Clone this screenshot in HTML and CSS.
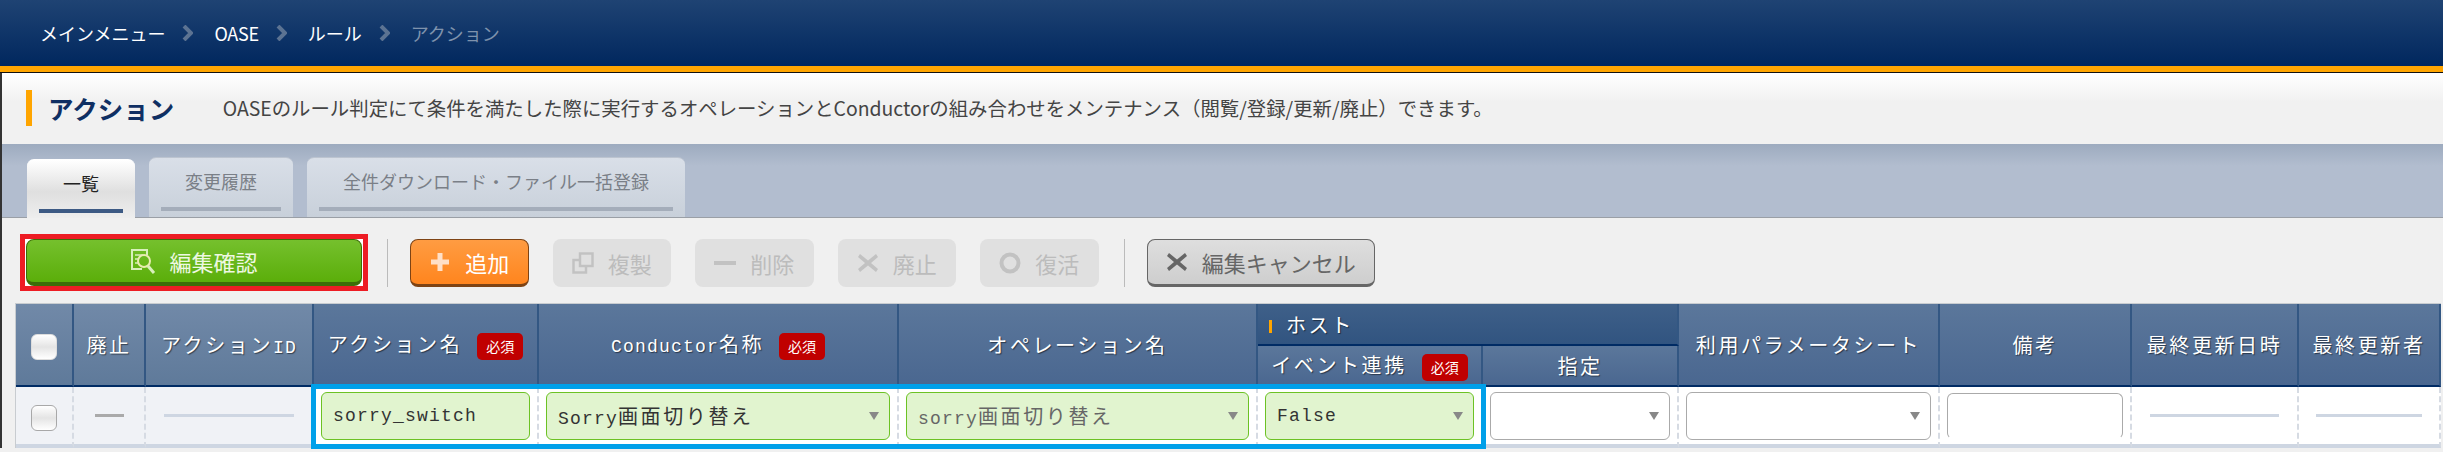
FILE: index.html
```html
<!DOCTYPE html>
<html lang="ja">
<head>
    <meta charset="UTF-8">
    <title>アクション</title>
    <link rel="stylesheet" href="styles.css">
</head>
<body>
    <nav class="crumbs">
        <a>メインメニュー</a>
        <svg class="chev" viewBox="0 0 11 16"><path d="M2 1l7 7-7 7" fill="none" stroke="#5c7392" stroke-width="4"/></svg>
        <a class="narrow">OASE</a>
        <svg class="chev" viewBox="0 0 11 16"><path d="M2 1l7 7-7 7" fill="none" stroke="#5c7392" stroke-width="4"/></svg>
        <a>ルール</a>
        <svg class="chev" viewBox="0 0 11 16"><path d="M2 1l7 7-7 7" fill="none" stroke="#5c7392" stroke-width="4"/></svg>
        <a class="current">アクション</a>
    </nav>
    <div class="accent"></div>

    <div class="main">
        <div class="title-bar">
            <h1>アクション</h1>
            <p>OASEのルール判定にて条件を満たした際に実行するオペレーションとConductorの組み合わせをメンテナンス（閲覧/登録/更新/廃止）できます。</p>
        </div>

        <div class="tabs">
            <div class="tab active"><span class="tab-label">一覧</span></div>
            <div class="tab"><span class="tab-label">変更履歴</span></div>
            <div class="tab"><span class="tab-label">全件ダウンロード・ファイル一括登録</span></div>
        </div>

        <div class="toolbar">
            <div class="red-frame">
                <button class="btn btn-green">
                    <svg class="icon-check" viewBox="0 0 26 25" fill="none" stroke="#d8f0bc" stroke-width="2">
                        <path d="M12 20H2V1h15v5"/>
                        <path d="M5 6h8M5 10h3M5 14h3" stroke-width="1.500"/>
                        <circle cx="14" cy="12" r="6" stroke="#e8ecb0"/>
                        <path d="M18 17l6 7" stroke-width="3"/>
                    </svg>
                    編集確認
                </button>
            </div>
            <span class="sep first"></span>
            <button class="btn btn-orange">
                <svg class="icon" viewBox="0 0 22 22"><path d="M8.500 2h5v6.500H20v5h-6.500V20h-5v-6.500H2v-5h6.500z" fill="#ffe0c8"/></svg>
                追加
            </button>
            <button class="btn btn-off">
                <svg class="icon" viewBox="0 0 22 22" fill="none" stroke="#c2c2c2" stroke-width="2.500"><path d="M8 1.500h12.500V14H8z"/><path d="M8 8H1.500v12.500H14V14"/></svg>
                複製
            </button>
            <button class="btn btn-off">
                <svg class="icon" viewBox="0 0 22 22"><rect x="0" y="9" width="22" height="4" fill="#c2c2c2"/></svg>
                削除
            </button>
            <button class="btn btn-off">
                <svg class="icon" viewBox="0 0 22 22"><path d="M3 2l8 6.500L19 2l2 3-7 6 7 6-2 3-8-6.500L3 20l-2-3 7-6-7-6z" fill="#c2c2c2"/></svg>
                廃止
            </button>
            <button class="btn btn-off">
                <svg class="icon" viewBox="0 0 22 22"><circle cx="11" cy="11" r="8.500" fill="none" stroke="#c2c2c2" stroke-width="4"/></svg>
                復活
            </button>
            <span class="sep"></span>
            <button class="btn btn-gray">
                <svg class="icon" viewBox="0 0 22 22"><path d="M3 2l8 6.500L19 2l2 3-7 6 7 6-2 3-8-6.500L3 20l-2-3 7-6-7-6z" fill="#666"/></svg>
                編集キャンセル
            </button>
        </div>

        <div class="grid">
            <table>
                <colgroup>
                    <col class="c1"><col class="c2"><col class="c3"><col class="c4"><col class="c5"><col class="c6">
                    <col class="c7"><col class="c8"><col class="c9"><col class="c10"><col class="c11"><col class="c12">
                </colgroup>
                <thead>
                    <tr class="head-top">
                        <th rowspan="2" class="light"><span class="check"></span></th>
                        <th rowspan="2" class="light">廃止</th>
                        <th rowspan="2" class="light">アクション<span class="lat">ID</span></th>
                        <th rowspan="2">アクション名<span class="req">必須</span></th>
                        <th rowspan="2"><span class="lat">Conductor</span>名称<span class="req">必須</span></th>
                        <th rowspan="2">オペレーション名</th>
                        <th colspan="2" class="group"><i class="mark"></i>ホスト</th>
                        <th rowspan="2">利用パラメータシート</th>
                        <th rowspan="2">備考</th>
                        <th rowspan="2">最終更新日時</th>
                        <th rowspan="2">最終更新者</th>
                    </tr>
                    <tr class="head-sub">
                        <th>イベント連携<span class="req">必須</span></th>
                        <th>指定</th>
                    </tr>
                </thead>
                <tbody>
                    <tr>
                        <td class="tint"><span class="check row-check"></span></td>
                        <td class="tint"><span class="dash dark"></span></td>
                        <td class="tint"><span class="dash id"></span></td>
                        <td><div class="field ok"><span class="lat">sorry_switch</span></div></td>
                        <td><div class="field ok"><span><span class="lat">Sorry</span>画面切り替え</span><i class="arrow"></i></div></td>
                        <td><div class="field ok dim"><span><span class="lat">sorry</span>画面切り替え</span><i class="arrow"></i></div></td>
                        <td><div class="field ok"><span class="lat">False</span><i class="arrow"></i></div></td>
                        <td><div class="field"><span></span><i class="arrow"></i></div></td>
                        <td><div class="field"><span></span><i class="arrow"></i></div></td>
                        <td><div class="field note"></div></td>
                        <td><span class="dash date"></span></td>
                        <td><span class="dash user"></span></td>
                    </tr>
                </tbody>
            </table>
            <div class="blue-frame"></div>
        </div>
    </div>
</body>
</html>
```

FILE: styles.css
```css
body {
    margin: 0;
    width: 2443px;
    height: 452px;
    overflow: hidden;
    background-color: #f0f0f0;
    font-family: "Noto Sans CJK JP", "Liberation Sans", sans-serif;
}

/* breadcrumb */
.crumbs {
    display: flex;
    align-items: center;
    box-sizing: border-box;
    height: 66px;
    padding-left: 40px;
    font-size: 18px;
    color: #fff;
    background: linear-gradient(#1f4373, #00275e);
}
.crumbs .current {
    color: #7f93ad;
}
.crumbs .narrow {
    letter-spacing: -0.300px;
}
.chev {
    flex: none;
    width: 11px;
    height: 16px;
    margin: 0 21px 0 17px;
}
.accent {
    height: 6px;
    background-color: #ffa500;
    border-bottom: 1px solid #111;
}

.main {
    border-left: 2px solid #333;
}

/* title */
.title-bar {
    display: flex;
    align-items: center;
    box-sizing: border-box;
    height: 71px;
    padding: 0 0 2px 24px;
    background: linear-gradient(#fff, #f1f1f1 40%);
}
.title-bar h1 {
    margin: 0;
    padding-left: 16px;
    border-left: 6px solid #ffa500;
    font-size: 25.500px;
    line-height: 36px;
    color: #0f2f63;
}
.title-bar p {
    margin: 0 0 0 48.500px;
    font-size: 19.400px;
    color: #444;
}

/* tabs */
.tabs {
    display: flex;
    align-items: flex-end;
    box-sizing: border-box;
    height: 74px;
    padding-left: 25px;
    background: linear-gradient(#9dabbf, #b2bdcf 30%);
    border-bottom: 1px solid #9a9fa6;
}
.tab {
    box-sizing: border-box;
    height: 60px;
    margin-left: 14px;
    padding: 0 12px 6px;
    border-top: 1px solid #bcc4d0;
    border-radius: 7px 7px 0 0;
    background: linear-gradient(#d9dfe8, #c8d0da);
}
.tab.active {
    height: 59px;
    margin: 0 0 -1px;
    padding-bottom: 5px;
    border-top: 1px solid #fff;
    background: linear-gradient(#fff, #dfdfdf 55%, #eee);
}
.tab-label {
    display: flex;
    align-items: center;
    box-sizing: border-box;
    height: 100%;
    padding: 0 24px 4px;
    border-bottom: 4px solid #a4adba;
    font-size: 18px;
    color: #7a7f87;
}
.active .tab-label {
    border-bottom-color: #3d5a84;
    color: #222;
}

/* toolbar */
.toolbar {
    display: flex;
    align-items: center;
    box-sizing: border-box;
    height: 85px;
    padding: 16px 0 12px 18px;
}
.red-frame {
    padding: 0 1px;
    border: 5px solid #ed1c24;
    background-color: #fff;
    font-size: 0;
}
.sep {
    width: 1px;
    height: 48px;
    margin: 0 22px 0 25px;
    background-color: #bbb;
}
.sep.first {
    margin-left: 19px;
}
.btn {
    display: inline-flex;
    align-items: center;
    justify-content: center;
    gap: 14px;
    box-sizing: border-box;
    height: 48px;
    margin-right: 24px;
    padding: 0 18.250px;
    border: 1px solid transparent;
    border-radius: 8px;
    font-family: inherit;
    font-size: 22px;
    white-space: nowrap;
}
.btn + .sep {
    margin-left: 1px;
}
.btn-green {
    width: 336px;
    height: 47px;
    margin: 0;
    gap: 13px;
    border-color: #3d6d08;
    border-bottom-width: 4px;
    background: linear-gradient(#75c02d, #5bae0a);
    color: #eef8e2;
}
.btn-orange {
    border-color: #7e4314;
    border-bottom-width: 3px;
    background: linear-gradient(#ff9c42, #ff851e);
    color: #fff;
}
.btn-off {
    background-color: #e0e0e0;
    color: #bcbcbc;
}
.btn-gray {
    border-color: #666;
    border-bottom-width: 3px;
    background: linear-gradient(#dedede, #cecece);
    color: #666;
}
.icon {
    flex: none;
    width: 22px;
    height: 22px;
}
.icon-check {
    flex: none;
    width: 26px;
    height: 25px;
}

/* table */
.grid {
    position: relative;
    margin-left: 13px;
    width: 2426px;
}
table {
    width: 2426px;
    table-layout: fixed;
    border-collapse: separate;
    border-spacing: 0;
    border-top: 1px solid #c8ccd0;
    border-left: 1px solid #c8ccd0;
    box-sizing: border-box;
}
.c1 { width: 58px; }
.c2 { width: 72px; }
.c3 { width: 168px; }
.c4 { width: 225px; }
.c5 { width: 360px; }
.c6 { width: 359px; }
.c7 { width: 225px; }
.c8 { width: 196px; }
.c9 { width: 261px; }
.c10 { width: 192px; }
.c11 { width: 167px; }
.c12 { width: 142px; }

th {
    padding: 0;
    border-right: 2px solid #335783;
    border-bottom: 2px solid #002b64;
    background: linear-gradient(#5b779b, #4a6790);
    font-size: 20px;
    font-weight: normal;
    letter-spacing: 2.600px;
    white-space: nowrap;
    color: #fff;
    text-shadow: 1px 1px 1px rgba(0, 0, 0, 0.5);
}
th.light {
    background: linear-gradient(#7189a8, #5f7a9a);
}
.head-top {
    height: 42px;
}
.head-sub {
    height: 41px;
}
th.group {
    padding-left: 11px;
    text-align: left;
    background: linear-gradient(#3f6089, #315480);
}
.mark {
    display: inline-block;
    width: 3px;
    height: 13px;
    margin-right: 14px;
    background-color: #ffa500;
}
.lat {
    font-family: "Liberation Mono", monospace;
    font-size: 18px;
    letter-spacing: 1.200px;
}
.req {
    display: inline-block;
    width: 46px;
    height: 27px;
    margin-left: 15px;
    border-radius: 5px;
    background-color: #c00000;
    font-size: 14px;
    line-height: 27px;
    letter-spacing: 0;
    text-align: center;
    vertical-align: middle;
    text-shadow: none;
}

td {
    box-sizing: border-box;
    height: 61px;
    padding: 0 7px;
    border-right: 2px dashed #d6dbe3;
    border-bottom: 4px solid #ced6e2;
    background-color: #fff;
    font-size: 20px;
    letter-spacing: 2.600px;
    text-align: center;
    color: #333;
}
td.tint {
    background-color: #f0f2f6;
}
.check {
    display: inline-block;
    box-sizing: border-box;
    width: 26px;
    height: 26px;
    border: 1px solid #ddd;
    border-radius: 6px;
    background: linear-gradient(#fff, #e4e4e4 50%, #fff);
    vertical-align: middle;
}
.row-check {
    border-color: #a8a8a8;
}
.dash {
    display: block;
    height: 3px;
    background-color: #ced6e2;
}
.dash.dark {
    width: 29px;
    margin: 0 auto;
    background-color: #aaa;
}
.dash.id {
    margin: 0 11px;
}
.dash.date {
    margin: 0 11px;
}
.dash.user {
    margin: 0 10px;
}
.field {
    display: flex;
    align-items: center;
    justify-content: space-between;
    box-sizing: border-box;
    height: 48px;
    padding: 0 10px 0 11px;
    border: 1px solid #aaa;
    border-radius: 6px;
    background-color: #fff;
    text-align: left;
}
.field.ok {
    border-color: #6cc224;
    background-color: #e1f4cf;
}
.field.dim {
    color: #666;
}
.field.note {
    height: 46px;
    border-bottom-color: transparent;
}
.arrow {
    flex: none;
    width: 0;
    height: 0;
    border-top: 8px solid #888;
    border-left: 5.500px solid transparent;
    border-right: 5.500px solid transparent;
}

.blue-frame {
    position: absolute;
    left: 296px;
    top: 81px;
    box-sizing: border-box;
    width: 1175px;
    height: 65px;
    border: 5px solid #00a0e9;
}
```
